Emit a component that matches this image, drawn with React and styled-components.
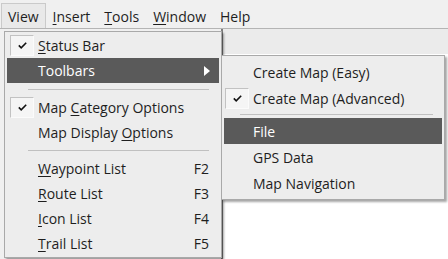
import React from "react";
import styled, { createGlobalStyle } from "styled-components";

const GlobalStyle = createGlobalStyle`
    body {
        margin: 0;
        font-family: "Open Sans", "Noto Sans", sans-serif;
        font-size: 14px;
        color: #1e1e1e;
    }
`;

const Page = styled.div`
    position: relative;
    width: 448px;
    height: 259px;
    overflow: hidden;
    background: #f0f0f0;
    display: flex;
    flex-direction: column;
`;

const MenuBar = styled.div`
    height: 29px;
    display: flex;
    align-items: center;
    padding-left: 1px;
    border-bottom: 1px solid #b4b4b4;
    box-sizing: border-box;
`;

const MenuTitle = styled.div`
    height: 25px;
    margin-top: 3px;
    display: flex;
    align-items: center;
    padding: 0 6px;
    box-sizing: border-box;
    border: 1px solid ${p => (p.$open ? "#cacaca" : "transparent")};
    border-bottom: none;
    background: ${p => (p.$open ? "#e9e9e9" : "transparent")};
`;

const Workspace = styled.div`
    flex: 1;
    display: flex;
`;

const LeftPane = styled.div`
    width: 221px;
`;

const DocWindow = styled.div`
    flex: 1;
    display: flex;
    flex-direction: column;
    border-left: 2px solid #7c7c7c;
`;

const ToolStrip = styled.div`
    height: 25px;
    background: #ebebeb;
`;

const Canvas = styled.div`
    flex: 1;
    background: #fff;
`;

const Dropdown = styled.div`
    position: absolute;
    left: ${p => p.$x}px;
    top: ${p => p.$y}px;
    width: ${p => p.$w}px;
    box-sizing: border-box;
    padding: ${p => p.$pad}px 2px;
    background: #ededed;
    border: 1px solid #a9a9a9;
    box-shadow: 2px 2px 2px rgba(0, 0, 0, 0.35);
`;

const Item = styled.div`
    height: ${p => p.$h}px;
    display: grid;
    grid-template-columns: ${p => p.$col}px 1fr auto;
    align-items: center;
    background: ${p => (p.$active ? "#5a5a5a" : "transparent")};
    color: ${p => (p.$active ? "#fff" : "#1e1e1e")};
`;

const CheckCell = styled.div`
    height: 100%;
    display: flex;
    align-items: center;
    padding-left: ${p => p.$inset}px;
`;

const CheckBox = styled.div`
    width: 24px;
    height: 21px;
    box-sizing: border-box;
    display: flex;
    align-items: center;
    justify-content: center;
    background: #f5f5f5;
    border-top: 1px solid #c2c2c2;
    border-left: 1px solid #c2c2c2;
    border-bottom: 1px solid #fbfbfb;
    border-right: 1px solid #fbfbfb;
`;

const Label = styled.span`
    white-space: nowrap;
    u {
        text-decoration: underline;
        text-decoration-thickness: 1px;
        text-underline-offset: 2px;
    }
`;

const Shortcut = styled.span`
    padding-right: 10px;
`;

const Arrow = styled.span`
    width: 0;
    height: 0;
    margin-right: 9px;
    border-top: 5px solid transparent;
    border-bottom: 5px solid transparent;
    border-left: 6px solid #fff;
`;

const Separator = styled.div`
    height: ${p => p.$h}px;
    display: flex;
    align-items: center;
    padding: 0 ${p => p.$right}px 0 ${p => p.$left}px;
    &::after {
        content: "";
        flex: 1;
        border-top: 1px solid #c0c0c0;
    }
`;

const Check = () => (
    <svg width="9" height="7" viewBox="0 0 9 7">
        <polyline points="0.8,3.4 3.2,5.8 8.2,0.8" fill="none" stroke="#111" strokeWidth="1.6" />
    </svg>
);

const MenuItem = ({ h, col, inset, checked, active, shortcut, arrow, children }) => (
    <Item $h={h} $col={col} $active={active}>
        <CheckCell $inset={inset}>{checked && <CheckBox><Check /></CheckBox>}</CheckCell>
        <Label>{children}</Label>
        {shortcut ? <Shortcut>{shortcut}</Shortcut> : arrow ? <Arrow /> : <span />}
    </Item>
);

const App = () => {
    return (
        <Page>
            <GlobalStyle />
            <MenuBar>
                <MenuTitle $open>View</MenuTitle>
                <MenuTitle><Label><u>I</u>nsert</Label></MenuTitle>
                <MenuTitle><Label><u>T</u>ools</Label></MenuTitle>
                <MenuTitle><Label><u>W</u>indow</Label></MenuTitle>
                <MenuTitle>Help</MenuTitle>
            </MenuBar>
            <Workspace>
                <LeftPane />
                <DocWindow>
                    <ToolStrip />
                    <Canvas />
                </DocWindow>
            </Workspace>

            <Dropdown $x={4} $y={31} $w={218} $pad={1}>
                <MenuItem h={25} col={31} inset={3} checked><u>S</u>tatus Bar</MenuItem>
                <MenuItem h={25} col={31} active arrow>Toolbars</MenuItem>
                <Separator $h={12} $left={21} $right={10} />
                <MenuItem h={25} col={31} inset={3} checked>Map <u>C</u>ategory Options</MenuItem>
                <MenuItem h={25} col={31}>Map Display <u>O</u>ptions</MenuItem>
                <Separator $h={11} $left={21} $right={10} />
                <MenuItem h={25} col={31} shortcut="F2"><u>W</u>aypoint List</MenuItem>
                <MenuItem h={25} col={31} shortcut="F3"><u>R</u>oute List</MenuItem>
                <MenuItem h={25} col={31} shortcut="F4"><u>I</u>con List</MenuItem>
                <MenuItem h={25} col={31} shortcut="F5"><u>T</u>rail List</MenuItem>
            </Dropdown>

            <Dropdown $x={221} $y={55} $w={224} $pad={3}>
                <MenuItem h={26} col={29} inset={1}>Create Map (Easy)</MenuItem>
                <MenuItem h={26} col={29} inset={1} checked>Create Map (Advanced)</MenuItem>
                <Separator $h={7} $left={16} $right={9} />
                <MenuItem h={26} col={29} active>File</MenuItem>
                <MenuItem h={26} col={29}>GPS Data</MenuItem>
                <MenuItem h={26} col={29}>Map Navigation</MenuItem>
            </Dropdown>
        </Page>
    );
};

export default App;
